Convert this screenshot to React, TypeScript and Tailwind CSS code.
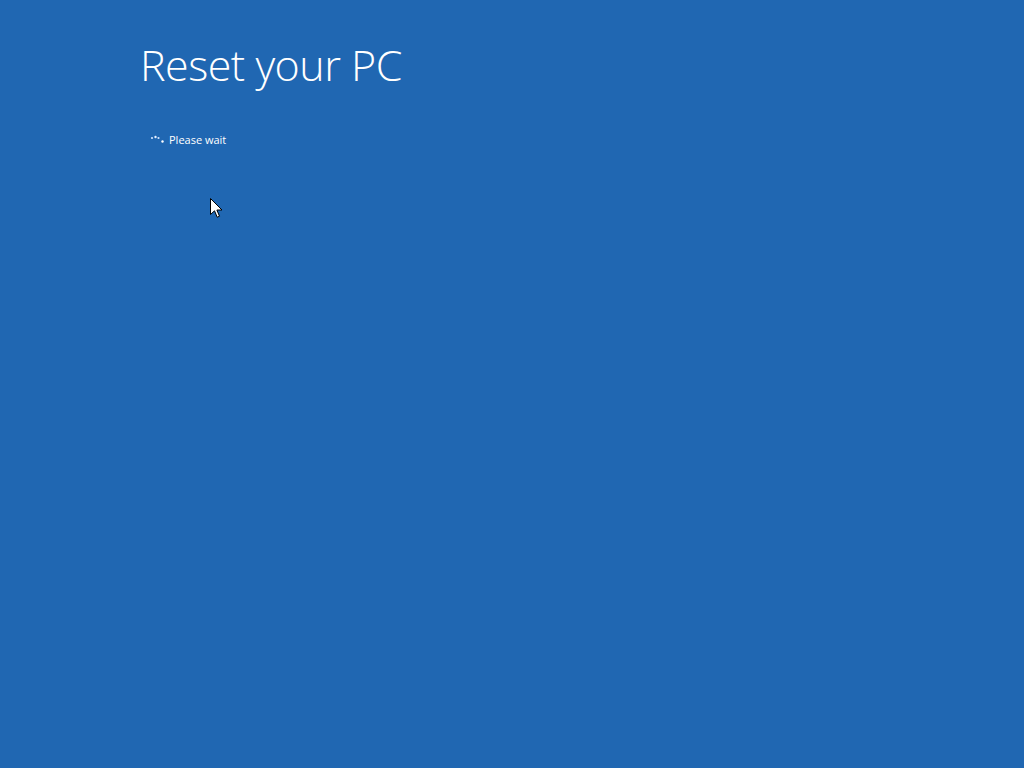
import React from "react";

export default function App() {
  return (
    <div className="relative w-[1024px] h-[768px] bg-[#2067b2] overflow-hidden" style={{ fontFamily: '"Open Sans", "Noto Sans", sans-serif' }}>
      <div className="pl-[140px] pt-[35px]">
        <h1 className="text-[43px] leading-[60px] font-light text-white tracking-[-0.5px]">Reset your PC</h1>
        <div className="mt-[38px] flex items-center gap-[4px] pl-[10px]">
          <svg width="15" height="10" viewBox="0 0 15 10">
            <circle cx="2" cy="3" r="1.1" fill="#cfe3ff" />
            <circle cx="5.5" cy="2" r="1.2" fill="#e6f0ff" />
            <circle cx="8.5" cy="3" r="1.1" fill="#cfe3ff" />
            <circle cx="12.5" cy="6.5" r="1.2" fill="#ffffff" />
          </svg>
          <span className="text-[11px] text-white leading-[14px]">Please wait</span>
        </div>
      </div>
      <svg className="absolute left-[210px] top-[198px]" width="13" height="21" viewBox="0 0 13 21">
        <path d="M0.5 0.5 L0.5 16.5 L4.5 12.8 L7.2 19.2 L9.5 18.2 L6.9 12 L12 12 Z" fill="#ffffff" stroke="#000000" strokeWidth="1" strokeLinejoin="miter" />
      </svg>
    </div>
  );
}
